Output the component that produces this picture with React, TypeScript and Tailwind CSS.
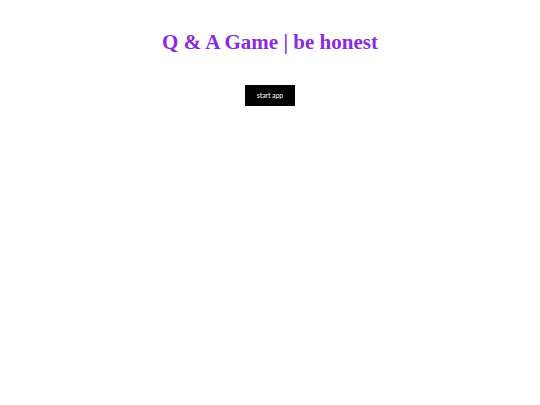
export default function App() {
  return (
    <div className="flex min-h-[405px] flex-col items-center bg-white">
      <h1 className="mt-[27px] font-['Liberation_Serif',serif] text-[21px] font-bold leading-[30px] text-[#8a2be2]">
        Q &amp; A Game | be honest
      </h1>
      <button className="mt-[28px] h-[21px] w-[50px] bg-black font-['Lato',sans-serif] text-[7px] font-normal tracking-[-0.1px] text-white antialiased">
        start app
      </button>
    </div>
  );
}
